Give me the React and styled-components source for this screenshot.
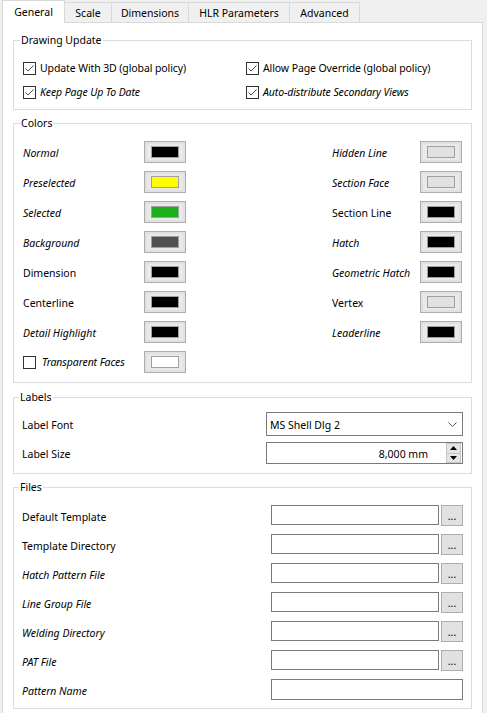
import React from "react";
import styled, { createGlobalStyle } from "styled-components";

const Global = createGlobalStyle`
  html, body { margin: 0; padding: 0; background: #f0f0f0; }
  body { font-family: "Noto Sans", "Open Sans", sans-serif; font-size: 10.5px; color: #000; }
  * { box-sizing: border-box; }
`;

const Window = styled.div`
  width: 487px;
  height: 713px;
  overflow: hidden;
  background: #f0f0f0;
`;

const TabBar = styled.div`
  display: flex;
  align-items: flex-end;
  height: 23px;
  padding-left: 2px;
  position: relative;
  z-index: 1;
`;

const Tab = styled.div`
  width: ${(p) => p.$w}px;
  height: ${(p) => (p.$active ? 23 : 20)}px;
  margin-bottom: ${(p) => (p.$active ? 0 : 1)}px;
  margin-left: ${(p) => (p.$first ? 0 : -1)}px;
  border: 1px solid #d9d9d9;
  border-bottom: none;
  background: ${(p) => (p.$active ? "#fff" : "#f0f0f0")};
  position: relative;
  z-index: ${(p) => (p.$active ? 2 : 1)};
  display: flex;
  align-items: center;
  justify-content: center;
  padding-top: ${(p) => (p.$active ? 0 : 1)}px;
  white-space: nowrap;
`;

const Pane = styled.div`
  margin-left: 2px;
  margin-top: -1px;
  width: 481px;
  height: 720px;
  background: #fff;
  border: 1px solid #d9d9d9;
  padding: 10px 10px 0 10px;
  display: flex;
  flex-direction: column;
`;

const Group = styled.fieldset`
  margin: ${(p) => p.$mt || 0}px 0 0 0;
  min-width: 0;
  border: 1px solid #dcdcdc;
  padding: ${(p) => p.$pad};
`;

const Legend = styled.legend`
  padding: 0 1px;
  margin-left: -3px;
  line-height: 14px;
`;

const CheckGrid = styled.div`
  display: grid;
  grid-template-columns: 223px 1fr;
  grid-auto-rows: 24px;
`;

const CheckRow = styled.label`
  display: flex;
  align-items: center;
  gap: ${(p) => p.$gap || 4}px;
  font-style: ${(p) => (p.$italic ? "italic" : "normal")};
  white-space: nowrap;
  letter-spacing: -0.1px;
`;

const Box = styled.svg`
  flex: none;
  display: block;
`;

const CheckBox = ({ checked }) => (
  <Box width="13" height="13" viewBox="0 0 13 13">
    <rect x="0.5" y="0.5" width="12" height="12" fill="#fff" stroke="#333" />
    {checked && (
      <polyline points="2.5,6.5 5,9 10.5,3.5" fill="none" stroke="#444" strokeWidth="1" />
    )}
  </Box>
);

const ColorsLayout = styled.div`
  display: flex;
  justify-content: space-between;
`;

const ColorCol = styled.div`
  display: grid;
  grid-template-columns: ${(p) => p.$label}px 42px;
  grid-auto-rows: 22px;
  row-gap: 8px;
  align-items: center;
`;

const Label = styled.span`
  font-style: ${(p) => (p.$italic ? "italic" : "normal")};
  white-space: nowrap;
  padding-top: 2px;
`;

const ColorButton = styled.div`
  width: 42px;
  height: 22px;
  border: 1px solid #adadad;
  background: #e1e1e1;
  padding: 2px;
  display: flex;
`;

const ColorInner = styled.div`
  flex: 1;
  background: #e9e9e9;
  padding: 2px 4px;
  display: flex;
`;

const Swatch = styled.div`
  flex: 1;
  border: 1px solid #a0a0a0;
  background: ${(p) => p.$c};
`;

const FormGrid = styled.div`
  display: grid;
  grid-template-columns: 1fr ${(p) => p.$ctl}px;
  row-gap: ${(p) => p.$gap}px;
  align-items: center;
`;

const Combo = styled.div`
  height: 24px;
  border: 1px solid #7a7a7a;
  background: #fff;
  display: flex;
  align-items: center;
  padding: 1px 5px 0 3px;
  justify-content: space-between;
`;

const Spin = styled.div`
  height: 22px;
  border: 1px solid #7a7a7a;
  background: #fff;
  display: flex;
  align-items: stretch;
`;

const SpinValue = styled.div`
  flex: 1;
  padding: 1px 18px 0 0;
  display: flex;
  align-items: center;
  justify-content: flex-end;
`;

const SpinButtons = styled.div`
  width: 15px;
  margin: 0 1px 0 0;
  display: flex;
  flex-direction: column;
`;

const SpinBtn = styled.div`
  flex: 1;
  background: #e5e5e5;
  border: 1px solid #c4c4c4;
  margin-top: ${(p) => (p.$down ? -1 : 0)}px;
  display: flex;
  align-items: center;
  justify-content: center;
`;

const FileRow = styled.div`
  display: flex;
  gap: 2px;
  height: 21px;
`;

const TextInput = styled.div`
  flex: 1;
  height: ${(p) => p.$h || 20}px;
  border: 1px solid #7a7a7a;
  background: #fff;
`;

const Browse = styled.div`
  width: 22px;
  height: 21px;
  border: 1px solid #adadad;
  background: #e1e1e1;
  display: flex;
  align-items: center;
  justify-content: center;
  line-height: 1;
  padding-top: 2px;
`;

const tabs = [
  { t: "General", w: 63 },
  { t: "Scale", w: 48 },
  { t: "Dimensions", w: 78 },
  { t: "HLR Parameters", w: 102 },
  { t: "Advanced", w: 71 },
];

const leftColors = [
  ["Normal", true, "#000"],
  ["Preselected", true, "#ffff00"],
  ["Selected", true, "#1cb01c"],
  ["Background", true, "#505050"],
  ["Dimension", false, "#000"],
  ["Centerline", false, "#000"],
  ["Detail Highlight", true, "#000"],
];

const rightColors = [
  ["Hidden Line", true, "#e1e1e1"],
  ["Section Face", true, "#e1e1e1"],
  ["Section Line", false, "#000"],
  ["Hatch", true, "#000"],
  ["Geometric Hatch", true, "#000"],
  ["Vertex", false, "#e1e1e1"],
  ["Leaderline", true, "#000"],
];

const files = [
  ["Default Template", false],
  ["Template Directory", false],
  ["Hatch Pattern File", true],
  ["Line Group File", true],
  ["Welding Directory", true],
  ["PAT File", true],
];

const Color = ({ c }) => (
  <ColorButton>
    <ColorInner>
      <Swatch $c={c} />
    </ColorInner>
  </ColorButton>
);

export default function App() {
  return (
    <Window>
      <Global />
      <TabBar>
        {tabs.map((t, i) => (
          <Tab key={t.t} $w={t.w} $active={i === 0} $first={i === 0}>
            {t.t}
          </Tab>
        ))}
      </TabBar>
      <Pane>
        <Group $pad="9px 9px 5px 9px">
          <Legend>Drawing Update</Legend>
          <CheckGrid>
            <CheckRow>
              <CheckBox checked />
              Update With 3D (global policy)
            </CheckRow>
            <CheckRow>
              <CheckBox checked />
              Allow Page Override (global policy)
            </CheckRow>
            <CheckRow $italic>
              <CheckBox checked />
              Keep Page Up To Date
            </CheckRow>
            <CheckRow $italic>
              <CheckBox checked />
              Auto-distribute Secondary Views
            </CheckRow>
          </CheckGrid>
        </Group>

        <Group $mt={6} $pad="11px 9px 9px 9px">
          <Legend>Colors</Legend>
          <ColorsLayout>
            <ColorCol $label={121}>
              {leftColors.map(([l, it, c]) => (
                <React.Fragment key={l}>
                  <Label $italic={it}>{l}</Label>
                  <Color c={c} />
                </React.Fragment>
              ))}
              <CheckRow $italic $gap={6}>
                <CheckBox />
                Transparent Faces
              </CheckRow>
              <Color c="#fff" />
            </ColorCol>
            <ColorCol $label={88}>
              {rightColors.map(([l, it, c]) => (
                <React.Fragment key={l}>
                  <Label $italic={it}>{l}</Label>
                  <Color c={c} />
                </React.Fragment>
              ))}
            </ColorCol>
          </ColorsLayout>
        </Group>

        <Group $mt={7} $pad="8px 8px 9px 8px">
          <Legend>Labels</Legend>
          <FormGrid $ctl={197} $gap={6}>
            <Label>Label Font</Label>
            <Combo>
              <span>MS Shell Dlg 2</span>
              <svg width="9" height="5" viewBox="0 0 9 5">
                <polyline points="0.5,0.5 4.5,4.5 8.5,0.5" fill="none" stroke="#555" />
              </svg>
            </Combo>
            <Label>Label Size</Label>
            <Spin>
              <SpinValue>8,000 mm</SpinValue>
              <SpinButtons>
                <SpinBtn>
                  <svg width="7" height="4" viewBox="0 0 7 4">
                    <polygon points="0,4 3.5,0 7,4" fill="#000" />
                  </svg>
                </SpinBtn>
                <SpinBtn $down>
                  <svg width="7" height="4" viewBox="0 0 7 4">
                    <polygon points="0,0 3.5,4 7,0" fill="#000" />
                  </svg>
                </SpinBtn>
              </SpinButtons>
            </Spin>
          </FormGrid>
        </Group>

        <Group $mt={6} $pad="11px 8px 8px 8px">
          <Legend>Files</Legend>
          <FormGrid $ctl={192} $gap={8}>
            {files.map(([l, it]) => (
              <React.Fragment key={l}>
                <Label $italic={it}>{l}</Label>
                <FileRow>
                  <TextInput />
                  <Browse>...</Browse>
                </FileRow>
              </React.Fragment>
            ))}
            <Label $italic>Pattern Name</Label>
            <FileRow>
              <TextInput $h={21} />
            </FileRow>
          </FormGrid>
        </Group>
      </Pane>
    </Window>
  );
}
